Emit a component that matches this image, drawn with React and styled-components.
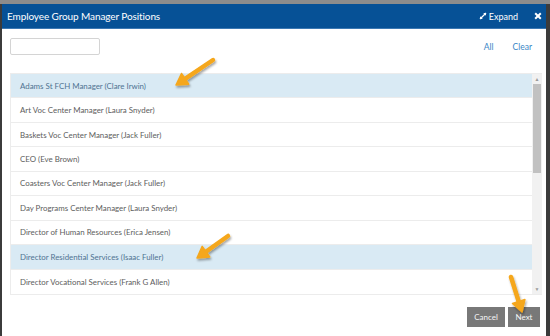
import React from 'react'
import styled, { createGlobalStyle } from 'styled-components'

const GlobalStyle = createGlobalStyle`
  html, body { margin: 0; padding: 0; }
  body {
    width: 550px;
    height: 336px;
    overflow: hidden;
    background: #4a4a4a;
    font-family: Lato, "Open Sans", sans-serif;
  }
`

const Backdrop = styled.div`
  position: relative;
  width: 550px;
  height: 336px;
  padding: 4px 4px 0 2px;
  box-sizing: border-box;
  background: linear-gradient(#8c8c8c 0 4px, #3b3b3b 4px);
`

const Modal = styled.div`
  background: #fff;
  height: 340px;
  display: flex;
  flex-direction: column;
`

const Header = styled.div`
  height: 24px;
  background: #065196;
  border-bottom: 1px solid #3b78b3;
  display: flex;
  align-items: center;
  padding: 0 4px 0 5px;
  color: #fff;
`

const Title = styled.div`
  flex: 1;
  font-size: 10px;
  font-weight: 400;
  letter-spacing: -0.1px;
`

const ExpandBtn = styled.div`
  display: flex;
  align-items: center;
  gap: 2px;
  font-size: 9px;
  margin-right: 16px;
`

const Toolbar = styled.div`
  display: flex;
  align-items: center;
  padding: 9px 14px 0 8px;
  height: 17px;
`

const Search = styled.input`
  width: 90px;
  height: 17px;
  box-sizing: border-box;
  border: 1px solid #d4d4d4;
  border-radius: 2px;
  padding: 0 4px;
  outline: none;
`

const Links = styled.div`
  margin-left: auto;
  display: flex;
  gap: 19px;
  font-size: 8.5px;
  color: #3a86c6;
`

const ListWrap = styled.div`
  margin: 18px 4px 0 8px;
  height: 222px;
  display: flex;
  border-top: 1px solid #ececec;
  border-left: 1px solid #ececec;
  border-bottom: 1px solid #ececec;
  box-sizing: border-box;
`

const List = styled.div`
  flex: 1;
  display: flex;
  flex-direction: column;
`

const Row = styled.div`
  height: 24.56px;
  box-sizing: border-box;
  display: flex;
  align-items: center;
  padding-left: 9px;
  font-size: 7.9px;
  color: ${p => (p.$selected ? '#4f7392' : '#5d5d5d')};
  background: ${p => (p.$selected ? '#d9eaf4' : '#fff')};
  border-bottom: 1px solid #ececec;
  &:last-child { border-bottom: none; }
`

const Scrollbar = styled.div`
  width: 10px;
  background: #f1f1f1;
  display: flex;
  flex-direction: column;
  align-items: center;
`

const ScrollArrow = styled.div`
  height: 10px;
  display: flex;
  align-items: center;
  justify-content: center;
  color: #9a9a9a;
  font-size: 5px;
`

const Thumb = styled.div`
  width: 8px;
  height: 89px;
  background: #c1c1c1;
`

const Spacer = styled.div`
  flex: 1;
`

const Footer = styled.div`
  display: flex;
  justify-content: flex-end;
  gap: 3px;
  padding: 12px 6px 0 0;
`

const Button = styled.button`
  height: 20px;
  width: ${p => p.$w}px;
  padding: 0;
  border: none;
  background: #787878;
  color: #f5f5f5;
  font-family: Lato, sans-serif;
  font-size: 8px;
`

const Arrow = styled.svg`
  position: absolute;
  left: 0;
  top: 0;
  overflow: visible;
  pointer-events: none;
`

const rows = [
  ['Adams St FCH Manager (Clare Irwin)', true],
  ['Art Voc Center Manager (Laura Snyder)', false],
  ['Baskets Voc Center Manager (Jack Fuller)', false],
  ['CEO (Eve Brown)', false],
  ['Coasters Voc Center Manager (Jack Fuller)', false],
  ['Day Programs Center Manager (Laura Snyder)', false],
  ['Director of Human Resources (Erica Jensen)', false],
  ['Director Residential Services (Isaac Fuller)', true],
  ['Director Vocational Services (Frank G Allen)', false],
]

const OrangeArrow = ({ id, x1, y1, x2, y2 }) => {
  const dx = x2 - x1
  const dy = y2 - y1
  const len = Math.hypot(dx, dy)
  const ux = dx / len
  const uy = dy / len
  const px = -uy
  const py = ux
  const hl = 11
  const hw = 6.5
  const bx = x2 - ux * hl
  const by = y2 - uy * hl
  const head = `${x2},${y2} ${bx + px * hw},${by + py * hw} ${bx - px * hw},${by - py * hw}`
  return (
    <Arrow width="1" height="1">
      <defs>
        <filter id={id} x="-50%" y="-50%" width="200%" height="200%">
          <feDropShadow dx="1" dy="2" stdDeviation="1.2" floodColor="#000" floodOpacity="0.35" />
        </filter>
      </defs>
      <g filter={`url(#${id})`}>
        <line x1={x1} y1={y1} x2={bx + ux} y2={by + uy} stroke="#f5a71b" strokeWidth="4.5" strokeLinecap="round" />
        <polygon points={head} fill="#f5a71b" strokeLinejoin="round" stroke="#f5a71b" strokeWidth="1.5" />
      </g>
    </Arrow>
  )
}

const App = () => {
  return (
    <>
      <GlobalStyle />
      <Backdrop>
        <Modal>
          <Header>
            <Title>Employee Group Manager Positions</Title>
            <ExpandBtn>
              <svg width="8" height="8" viewBox="0 0 8 8">
                <path d="M1 7 L7 1" stroke="#fff" strokeWidth="1.2" />
                <path d="M4.2 1 H7 V3.8 Z" fill="#fff" />
                <path d="M1 4.2 V7 H3.8 Z" fill="#fff" />
              </svg>
              Expand
            </ExpandBtn>
            <svg width="8" height="8" viewBox="0 0 8 8">
              <path d="M1.2 1.2 L6.8 6.8 M6.8 1.2 L1.2 6.8" stroke="#fff" strokeWidth="2" />
            </svg>
          </Header>
          <Toolbar>
            <Search />
            <Links>
              <span>All</span>
              <span>Clear</span>
            </Links>
          </Toolbar>
          <ListWrap>
            <List>
              {rows.map(([label, sel]) => (
                <Row key={label} $selected={sel}>{label}</Row>
              ))}
            </List>
            <Scrollbar>
              <ScrollArrow>▲</ScrollArrow>
              <Thumb />
              <Spacer />
              <ScrollArrow>▼</ScrollArrow>
            </Scrollbar>
          </ListWrap>
          <Footer>
            <Button $w={38}>Cancel</Button>
            <Button $w={32}>Next</Button>
          </Footer>
        </Modal>
        <OrangeArrow id="a1" x1={213} y1={60} x2={176} y2={85} />
        <OrangeArrow id="a2" x1={228} y1={236} x2={197} y2={258} />
        <OrangeArrow id="a3" x1={511} y1={277} x2={522} y2={312} />
      </Backdrop>
    </>
  )
}

export default App
